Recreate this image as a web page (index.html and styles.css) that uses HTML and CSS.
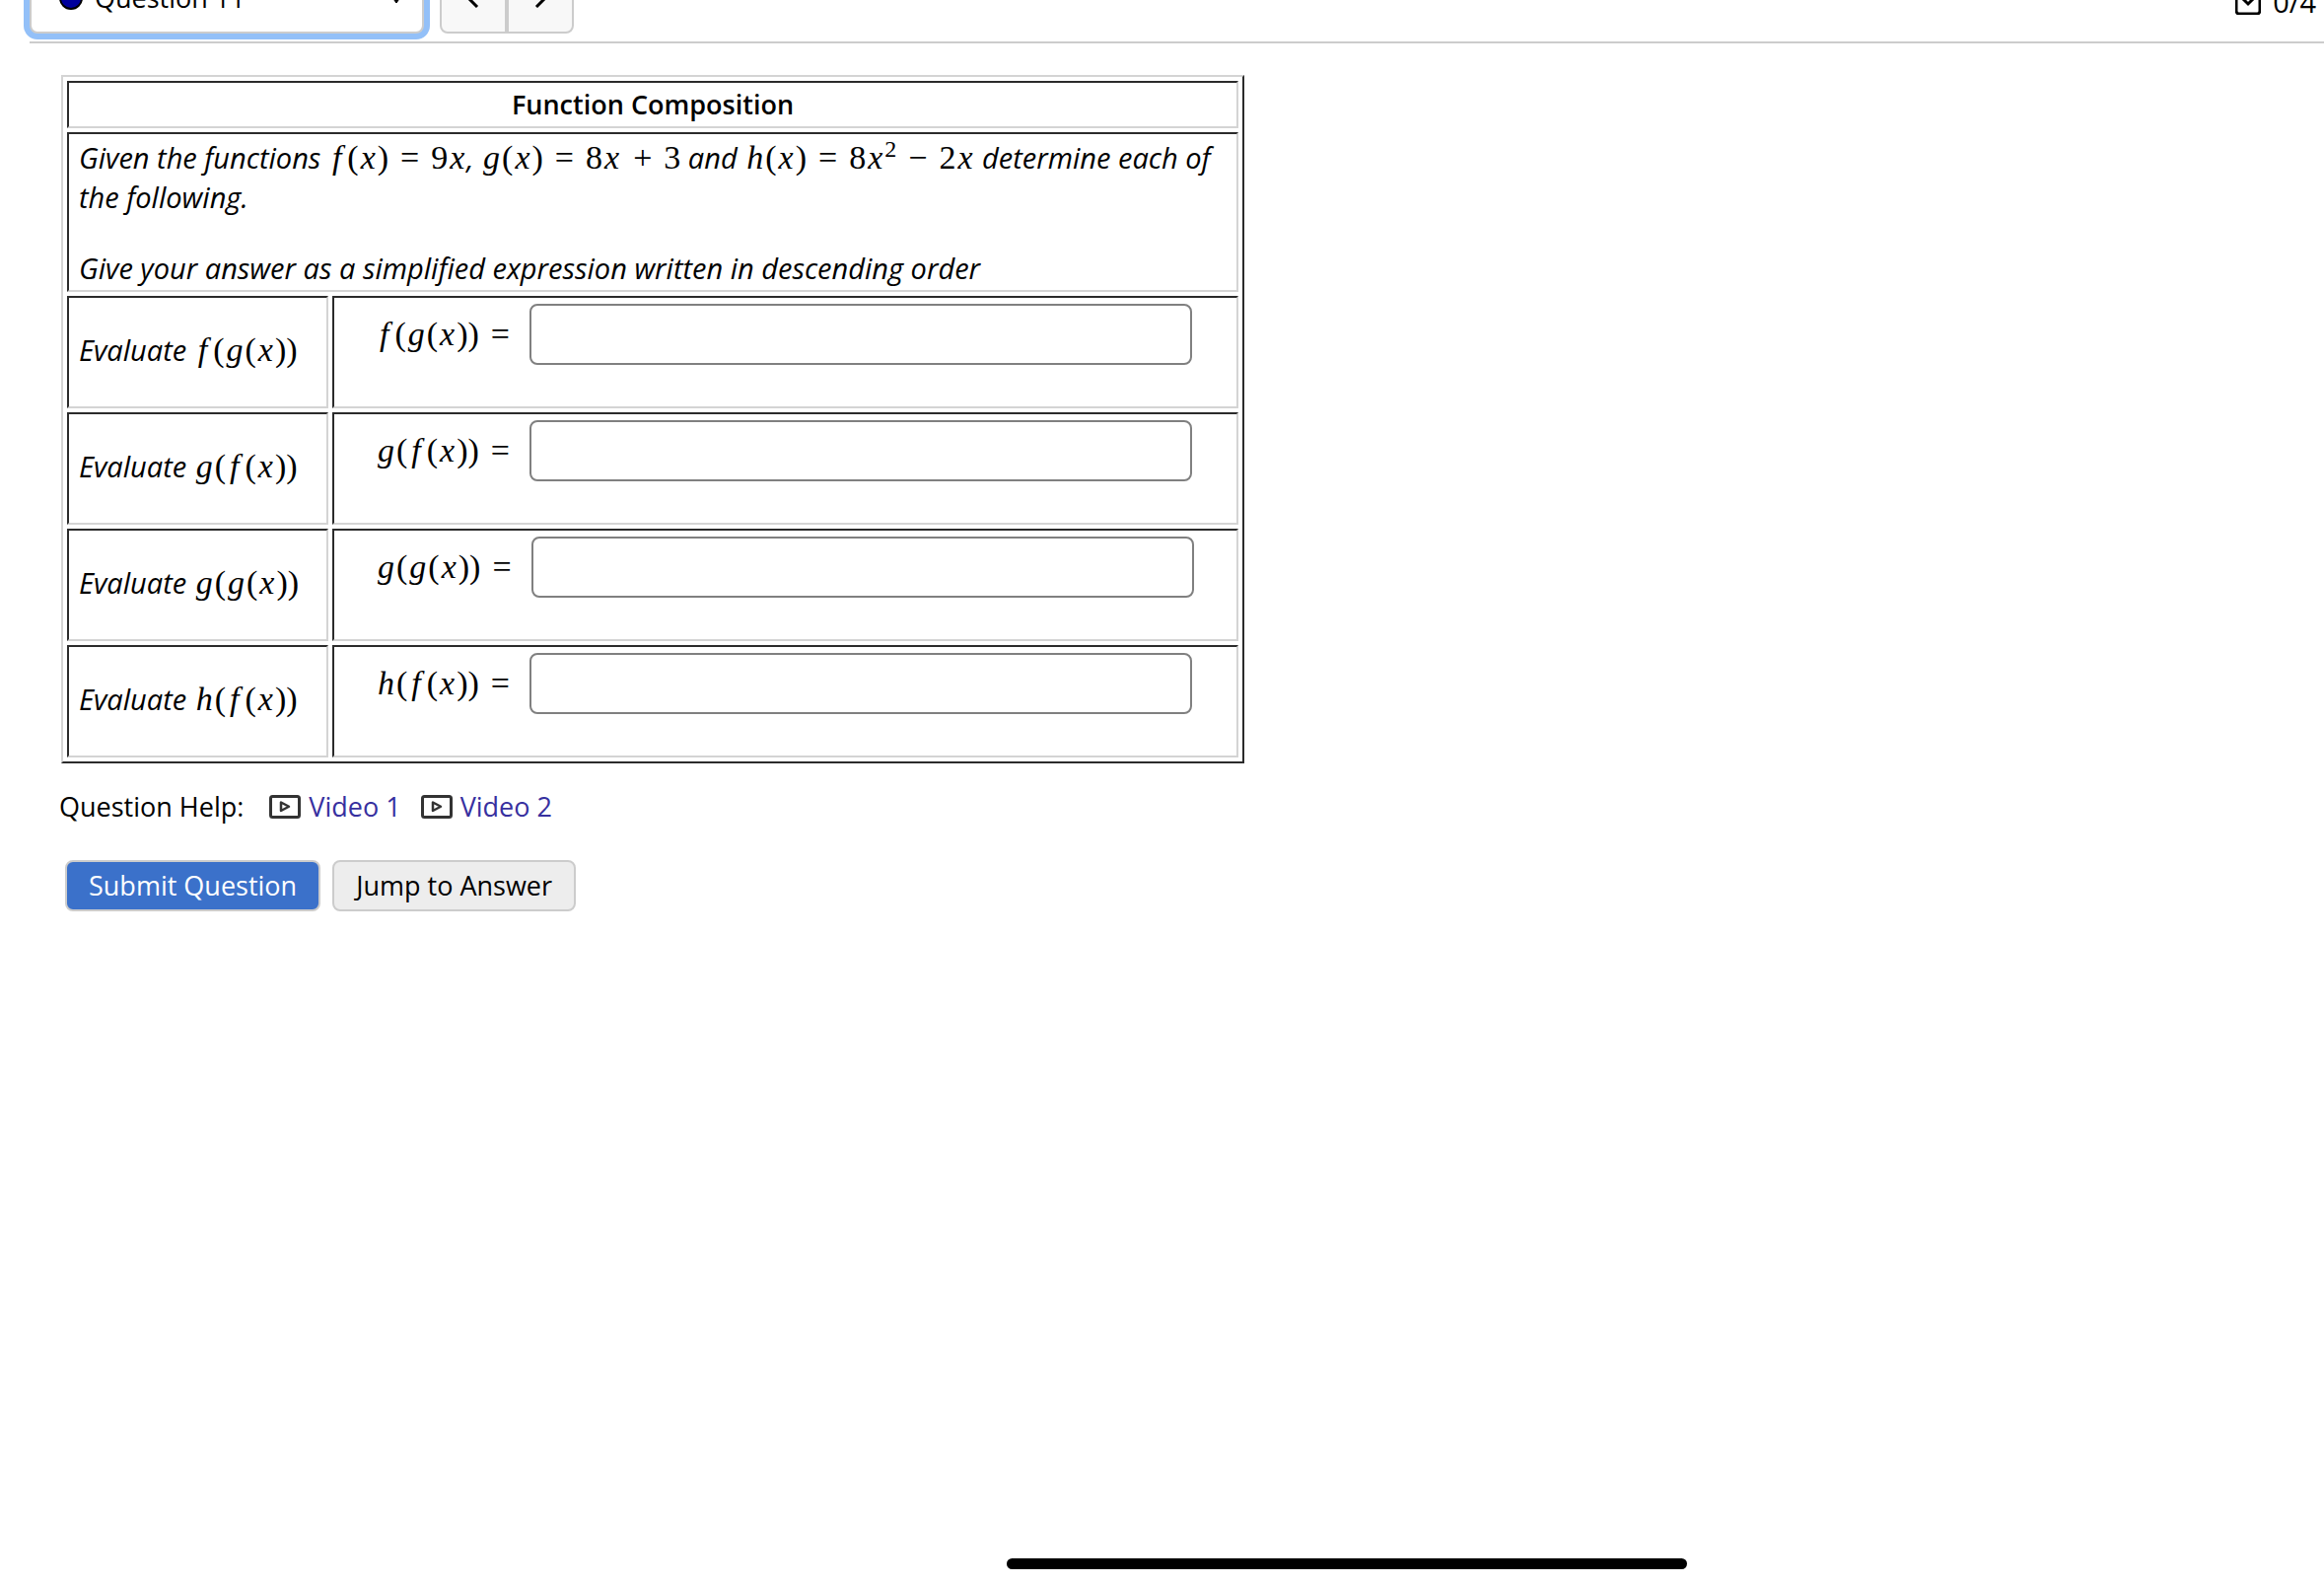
FILE: index.html
```html
<!DOCTYPE html>
<html lang="en">
<head>
<meta charset="utf-8">
<title>Question 11</title>
<link rel="stylesheet" href="styles.css">
</head>
<body>
<header class="topbar">
  <button type="button" class="picker" aria-haspopup="listbox">
    <svg class="dot" width="24" height="24" viewBox="0 0 24 24" aria-hidden="true"><circle cx="12" cy="12" r="11" fill="#00009c" stroke="#000" stroke-width="2"/></svg>
    <span class="picker-text">Question 11</span>
    <svg class="caret" width="12" height="12" viewBox="0 0 12 12" aria-hidden="true"><path d="M1 4h10L6 11z" fill="#000" stroke="#000" stroke-linejoin="round"/></svg>
  </button>
  <div class="pager">
    <button type="button" aria-label="Previous question"><svg width="12" height="18" viewBox="0 0 12 18" aria-hidden="true"><path d="M10 1L2 9l8 8" fill="none" stroke="#000" stroke-width="3"/></svg></button>
    <button type="button" aria-label="Next question"><svg width="12" height="18" viewBox="0 0 12 18" aria-hidden="true"><path d="M2 1l8 8-8 8" fill="none" stroke="#000" stroke-width="3"/></svg></button>
  </div>
  <div class="score">
    <svg width="26" height="26" viewBox="0 0 26 26" aria-hidden="true"><rect x="1" y="1" width="24" height="24" rx="3" fill="none" stroke="#000" stroke-width="3"/><path d="M7 9l6 6 6-6" fill="none" stroke="#000" stroke-width="3"/></svg>
    <span>0/4</span>
  </div>
</header>

<main class="question">
  <table class="problem">
    <colgroup><col class="col-prompt"><col></colgroup>
    <tr><th colspan="2">Function Composition</th></tr>
    <tr>
      <td colspan="2" class="intro">
        <p>Given the functions <span class="math"><i class="f">f</i>(<i>x</i>)<b>=</b>9<i>x</i></span>, <span class="math"><i>g</i>(<i>x</i>)<b>=</b>8<i>x</i><b>+</b>3</span> and <span class="math"><i>h</i>(<i>x</i>)<b>=</b>8<i>x</i><sup>2</sup><b>−</b>2<i>x</i></span> determine each of the following.</p>
        <p>Give your answer as a simplified expression written in descending order</p>
      </td>
    </tr>
    <tr>
      <td class="prompt">Evaluate <span class="math"><i class="f">f</i>(<i>g</i>(<i>x</i>))</span></td>
      <td class="answer"><div class="entry"><label class="math" for="a1"><i class="f">f</i>(<i>g</i>(<i>x</i>))<b>=</b></label><input id="a1" type="text"></div></td>
    </tr>
    <tr>
      <td class="prompt">Evaluate <span class="math"><i>g</i>(<i class="f">f</i>(<i>x</i>))</span></td>
      <td class="answer"><div class="entry"><label class="math" for="a2"><i>g</i>(<i class="f">f</i>(<i>x</i>))<b>=</b></label><input id="a2" type="text"></div></td>
    </tr>
    <tr>
      <td class="prompt">Evaluate <span class="math"><i>g</i>(<i>g</i>(<i>x</i>))</span></td>
      <td class="answer"><div class="entry"><label class="math" for="a3"><i>g</i>(<i>g</i>(<i>x</i>))<b>=</b></label><input id="a3" type="text"></div></td>
    </tr>
    <tr>
      <td class="prompt">Evaluate <span class="math"><i>h</i>(<i class="f">f</i>(<i>x</i>))</span></td>
      <td class="answer"><div class="entry"><label class="math" for="a4"><i>h</i>(<i class="f">f</i>(<i>x</i>))<b>=</b></label><input id="a4" type="text"></div></td>
    </tr>
  </table>

  <div class="help">
    <span class="help-title">Question Help:</span>
    <a href="#video1"><svg width="32" height="24" viewBox="0 0 32 24" aria-hidden="true"><g fill="none" stroke="#333" stroke-width="3"><rect x="1.5" y="1.5" width="29" height="21" rx="2"/><path d="M12 7.500v8.500l8-4.250z" stroke-width="2.500" stroke-linejoin="round"/></g></svg>Video 1</a>
    <a href="#video2"><svg width="32" height="24" viewBox="0 0 32 24" aria-hidden="true"><g fill="none" stroke="#333" stroke-width="3"><rect x="1.5" y="1.5" width="29" height="21" rx="2"/><path d="M12 7.500v8.500l8-4.250z" stroke-width="2.500" stroke-linejoin="round"/></g></svg>Video 2</a>
  </div>

  <div class="actions">
    <button type="button" class="btn primary">Submit Question</button>
    <button type="button" class="btn">Jump to Answer</button>
  </div>
</main>
<div class="home-bar"></div>
</body>
</html>
```
FILE: styles.css
```css
* { box-sizing: border-box; }
body {
  margin: 0;
  background: #fff;
  color: #000;
  font: 27px/36px "Open Sans", "Noto Sans", sans-serif;
}
button, input { font: inherit; color: inherit; }

.topbar {
  display: flex;
  align-items: flex-end;
  height: 44px;
  margin-left: 30px;
  padding-bottom: 8px;
  border-bottom: 2px solid #ccc;
}
.picker {
  display: flex;
  align-items: center;
  gap: 12px;
  width: 400px;
  height: 72px;
  padding: 0 20px 0 28px;
  background: #fff;
  border: 2px solid #ccc;
  border-radius: 8px;
  box-shadow: 0 0 0 6px #93c0f8;
  text-align: left;
}
.picker-text { flex: 1; }
.pager { display: flex; margin-left: 16px; }
.pager button {
  width: 68px;
  height: 72px;
  background: #f8f8f8;
  border: 2px solid #ccc;
  border-radius: 0 8px 8px 0;
}
.pager button:first-child { border-radius: 8px 0 0 8px; }
.score {
  display: flex;
  align-items: center;
  gap: 12px;
  height: 64px;
  margin-left: auto;
  margin-right: 8px;
  font-size: 29px;
}

.question { padding: 32px 60px 0; }
.problem {
  width: 1200px;
  max-width: 100%;
  margin-left: 2px;
  table-layout: fixed;
  border-collapse: separate;
  border-spacing: 4px;
  border: 2px solid;
  border-color: #d4d4d4 #2b2b2b #2b2b2b #d4d4d4;
}
.col-prompt { width: 265px; }
.problem th, .problem td {
  padding: 4px 10px;
  border: 2px solid;
  border-color: #2b2b2b #d4d4d4 #d4d4d4 #2b2b2b;
}
.problem th { font-weight: 600; }
.problem .intro, .problem .prompt { font-size: 29px; font-style: italic; }
.problem .intro { padding-top: 2px; }
.intro p { margin: 0 0 36px; }
.intro p:last-child { margin: 0; }
.problem .prompt { padding-bottom: 8px; white-space: nowrap; }
.problem .answer { padding: 6px 42px 42px; vertical-align: top; }
.entry { display: flex; align-items: center; gap: 8px; }
.entry input {
  width: 672px;
  height: 62px;
  padding: 0 12px;
  border: 2px solid #808080;
  border-radius: 8px;
}

.math {
  font: 34px/44px "Liberation Serif", serif;
  white-space: nowrap;
}
.math i { margin: 0 2px; }
.math .f { margin: 0 6px 0 4px; }
.math b { margin: 0 12px; font-weight: 400; }
.math sup { font-size: 24px; line-height: 0; }

.help {
  display: flex;
  gap: 20px;
  margin-top: 26px;
}
.help-title { margin-right: 6px; }
.help a {
  display: flex;
  align-items: center;
  gap: 8px;
  color: #37309f;
  text-decoration: none;
}
.actions { display: flex; gap: 12px; margin: 36px 6px; }
.btn {
  height: 52px;
  padding: 0 22px;
  background: #ededed;
  border: 2px solid #ccc;
  border-radius: 8px;
}
.btn.primary { background: #3b71ca; color: #fff; }

.home-bar {
  position: fixed;
  left: 1021px;
  bottom: 15px;
  width: 690px;
  height: 11px;
  border-radius: 6px;
  background: #000;
}
```
